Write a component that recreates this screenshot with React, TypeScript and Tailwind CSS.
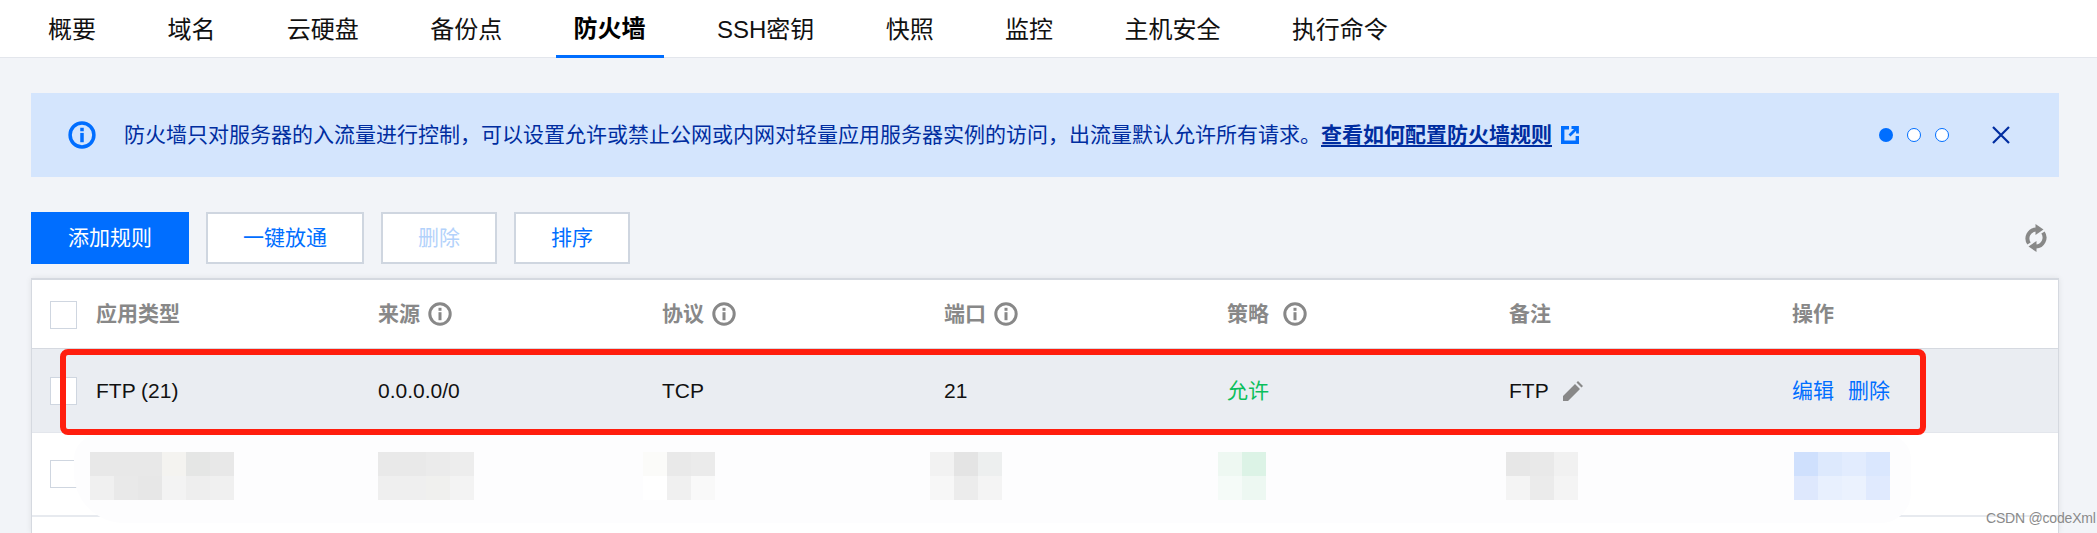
import React from 'react';

const tabs = ['概要', '域名', '云硬盘', '备份点', '防火墙', 'SSH密钥', '快照', '监控', '主机安全', '执行命令'];

const gridCols = 'grid grid-cols-[64px_282px_284px_282px_283px_282px_283px_1fr] items-center';

function InfoIcon({ className }: { className?: string }) {
  return (
    <svg viewBox="0 0 24 24" className={className} fill="none" stroke="currentColor">
      <circle cx="12" cy="12" r="10.2" strokeWidth="3" />
      <rect x="10.5" y="10.2" width="3" height="8" fill="currentColor" stroke="none" />
      <rect x="10.5" y="5.8" width="3" height="3" fill="currentColor" stroke="none" />
    </svg>
  );
}

function TabBar() {
  return (
    <div className="h-[58px] shrink-0 bg-white border-b border-[#e3e6ec] flex pl-[30px] gap-[35.4px]">
      {tabs.map((t) =>
        t === '防火墙' ? (
          <div key={t} className="h-[58px] px-[18px] flex items-center pt-[2px] text-[24px] font-bold text-black border-b-[3px] border-[#006eff]">
            {t}
          </div>
        ) : (
          <div key={t} className="h-[57px] px-[18px] flex items-center pt-[2px] text-[24px] text-[#111]">
            {t}
          </div>
        )
      )}
    </div>
  );
}

function Banner() {
  return (
    <div className="h-[84px] bg-[#d4e5fd] flex items-center pl-[37px] text-[21px] text-[#002da0]">
      <InfoIcon className="w-[28px] h-[28px] text-[#006eff] shrink-0" />
      <span className="ml-[28px] whitespace-nowrap">
        防火墙只对服务器的入流量进行控制，可以设置允许或禁止公网或内网对轻量应用服务器实例的访问，出流量默认允许所有请求。
      </span>
      <span className="font-bold underline underline-offset-[3px] whitespace-nowrap">查看如何配置防火墙规则</span>
      <svg viewBox="0 0 18 18" className="w-[18px] h-[18px] ml-[9px] text-[#006eff] shrink-0" fill="none" stroke="currentColor" strokeWidth="3.4">
        <path d="M8 1.7H1.7v14.6h14.6V10" />
        <path d="M8.5 9.5L16 2M10.5 1.5h6v6" strokeWidth="2.8" />
      </svg>
      <div className="ml-auto flex items-center gap-[14px]">
        <span className="w-[14px] h-[14px] rounded-full bg-[#006eff]" />
        <span className="w-[14px] h-[14px] rounded-full bg-white border border-[#006eff]" />
        <span className="w-[14px] h-[14px] rounded-full bg-white border border-[#006eff]" />
      </div>
      <svg viewBox="0 0 18 18" className="w-[18px] h-[18px] ml-[43px] mr-[49px] text-[#002da0]" fill="none" stroke="currentColor" strokeWidth="2.2">
        <path d="M1 1l16 16M17 1L1 17" />
      </svg>
    </div>
  );
}

function Toolbar() {
  return (
    <div className="mt-[35px] h-[52px] flex items-center text-[21px]">
      <div className="w-[158px] h-[52px] bg-[#006eff] text-white flex items-center justify-center">添加规则</div>
      <div className="ml-[17px] w-[158px] h-[52px] bg-white border-2 border-[#cfd6e0] text-[#006eff] flex items-center justify-center">一键放通</div>
      <div className="ml-[17px] w-[116px] h-[52px] bg-white border-2 border-[#cfd6e0] text-[#b3d2fb] flex items-center justify-center">删除</div>
      <div className="ml-[17px] w-[116px] h-[52px] bg-white border-2 border-[#cfd6e0] text-[#006eff] flex items-center justify-center">排序</div>
      <svg viewBox="0 0 22 28" className="ml-auto mr-[12px] w-[22px] h-[28px] text-[#888]" fill="none" stroke="currentColor">
        <path d="M4 19.5A9 9 0 0 1 11 5.5" strokeWidth="4" />
        <path d="M10.5 0l8 5.5-8 5.5z" fill="currentColor" stroke="none" />
        <path d="M18 8.5A9 9 0 0 1 11 22.5" strokeWidth="4" />
        <path d="M11.5 28l-8-5.5 8-5.5z" fill="currentColor" stroke="none" />
      </svg>
    </div>
  );
}

const headers: [string, boolean][] = [
  ['应用类型', false],
  ['来源', true],
  ['协议', true],
  ['端口', true],
  ['策略', true],
  ['备注', false],
  ['操作', false],
];

function Checkbox({ className }: { className?: string }) {
  return <div className={`w-[27px] h-[28px] bg-white border border-[#cfd6e0] ${className ?? ''}`} />;
}

function TableHeader() {
  return (
    <div className={`${gridCols} h-[69px] border-b border-[#d5d9e0] text-[21px] font-bold text-[#888]`}>
      <Checkbox className="ml-[18px] mt-[1px]" />
      {headers.map(([h, info]) => (
        <div key={h} className="flex items-center">
          {h}
          {info && <InfoIcon className={`w-[24px] h-[24px] text-[#888] ${h === '策略' ? 'ml-[14px]' : 'ml-[8px]'}`} />}
        </div>
      ))}
    </div>
  );
}

function FtpRow() {
  return (
    <div className={`${gridCols} h-[84px] bg-[#eaedf2] border-b border-[#e3e6ec] text-[21px] text-[#111]`}>
      <Checkbox className="ml-[18px]" />
      <div>FTP (21)</div>
      <div>0.0.0.0/0</div>
      <div>TCP</div>
      <div>21</div>
      <div className="text-[#0abf5b]">允许</div>
      <div className="flex items-center">
        FTP
        <svg viewBox="0 0 20 20" className="w-[20px] h-[20px] ml-[14px] text-[#888]" fill="currentColor">
          <path d="M0 20v-5L12 3l5 5L5 20zM13.5 1.5L15 0l5 5-1.5 1.5z" />
        </svg>
      </div>
      <div className="flex gap-[14px] text-[#006eff]">
        <span>编辑</span>
        <span>删除</span>
      </div>
    </div>
  );
}

// pixelated (blurred out) cells of the second row, top and bottom lines of blocks
const mosaics: { cls: string; top: string[]; bottom: string[] }[] = [
  {
    cls: '-ml-[6px]',
    top: ['bg-[#e8e8e8]', 'bg-[#e8e8e8]', 'bg-[#e8e8e8]', 'bg-[#f4f3f0]', 'bg-[#e5e6e5]', 'bg-[#e8e8e8]'],
    bottom: ['bg-[#f0f0f0]', 'bg-[#e9e9e9]', 'bg-[#e7e7e7]', 'bg-[#f3f3f3]', 'bg-[#eeeeee]', 'bg-[#f0f0f0]'],
  },
  {
    cls: '',
    top: ['bg-[#e9e9e9]', 'bg-[#e9e9e9]', 'bg-[#ebebeb]', 'bg-[#ededed]'],
    bottom: ['bg-[#efefef]', 'bg-[#efefef]', 'bg-[#f0f0ee]', 'bg-[#f3f3f3]'],
  },
  {
    cls: '-ml-[19px]',
    top: ['bg-[#fbfbf9]', 'bg-[#e9e9e9]', 'bg-[#ebebeb]'],
    bottom: ['bg-white', 'bg-[#f0f0f0]', 'bg-[#f9f9f9]'],
  },
  {
    cls: '-ml-[14px]',
    top: ['bg-[#f2f2f2]', 'bg-[#e4e4e4]', 'bg-[#edefef]'],
    bottom: ['bg-[#f7f7f7]', 'bg-[#ececec]', 'bg-[#f4f4f4]'],
  },
  {
    cls: '-ml-[9px]',
    top: ['bg-[#eef8f2]', 'bg-[#dcf3e6]'],
    bottom: ['bg-[#f5fbf8]', 'bg-[#edf8f2]'],
  },
  {
    cls: '-ml-[3px]',
    top: ['bg-[#e7e7e7]', 'bg-[#e9e9e9]', 'bg-[#f1f1f1]'],
    bottom: ['bg-[#f4f4f4]', 'bg-[#ebebeb]', 'bg-[#f4f4f4]'],
  },
  {
    cls: 'ml-[2px]',
    top: ['bg-[#cfe0fd]', 'bg-[#dde9fd]', 'bg-[#e2ecfe]', 'bg-[#dae7fe]'],
    bottom: ['bg-[#dee8fd]', 'bg-[#e8f0fe]', 'bg-[#ebf2fe]', 'bg-[#e0eafe]'],
  },
];

function BlurredRow() {
  return (
    <div className={`${gridCols} relative h-[84px] border-b-2 border-[#e7eaef]`}>
      <Checkbox className="ml-[18px]" />
      {/* white smudge painted over the row */}
      <div className="absolute left-[42px] right-[147px] top-[2px] h-[88px] rounded-tl-[24px] rounded-tr-[24px] rounded-bl-[50px] rounded-br-[30px] bg-[#fdfdfe]" />
      {mosaics.map((m, i) => (
        <div key={i} className={`relative mt-[4px] ${m.cls}`}>
          {[m.top, m.bottom].map((line, j) => (
            <div key={j} className="flex">
              {line.map((c, k) => (
                <div key={k} className={`w-[24px] h-[24px] ${c}`} />
              ))}
            </div>
          ))}
        </div>
      ))}
    </div>
  );
}

export default function App() {
  return (
    <div className="relative w-[2097px] h-[533px] overflow-hidden flex flex-col bg-[#f2f4f8] font-['Liberation_Sans','Noto_Sans_CJK_SC',sans-serif]">
      <TabBar />
      <div className="flex-1 flex flex-col px-[31px] pr-[38px] pt-[35px]">
        <Banner />
        <Toolbar />
        <div className="relative mt-[14px] flex-1 bg-white border-t-2 border-x border-[#d5d9e0] shadow-[0_0_6px_rgba(0,0,0,0.08)]">
          <TableHeader />
          <FtpRow />
          <BlurredRow />
          {/* red annotation box drawn over the screenshot */}
          <div className="absolute left-[28px] top-[69px] w-[1866px] h-[86px] rounded-[8px] border-[6px] border-[#ff1e0e]" />
        </div>
      </div>
      <div className="absolute left-[1986px] top-[510px] text-[14px] leading-[16px] text-[#8a8a8a] tracking-[-0.2px]">CSDN @codeXml</div>
    </div>
  );
}
